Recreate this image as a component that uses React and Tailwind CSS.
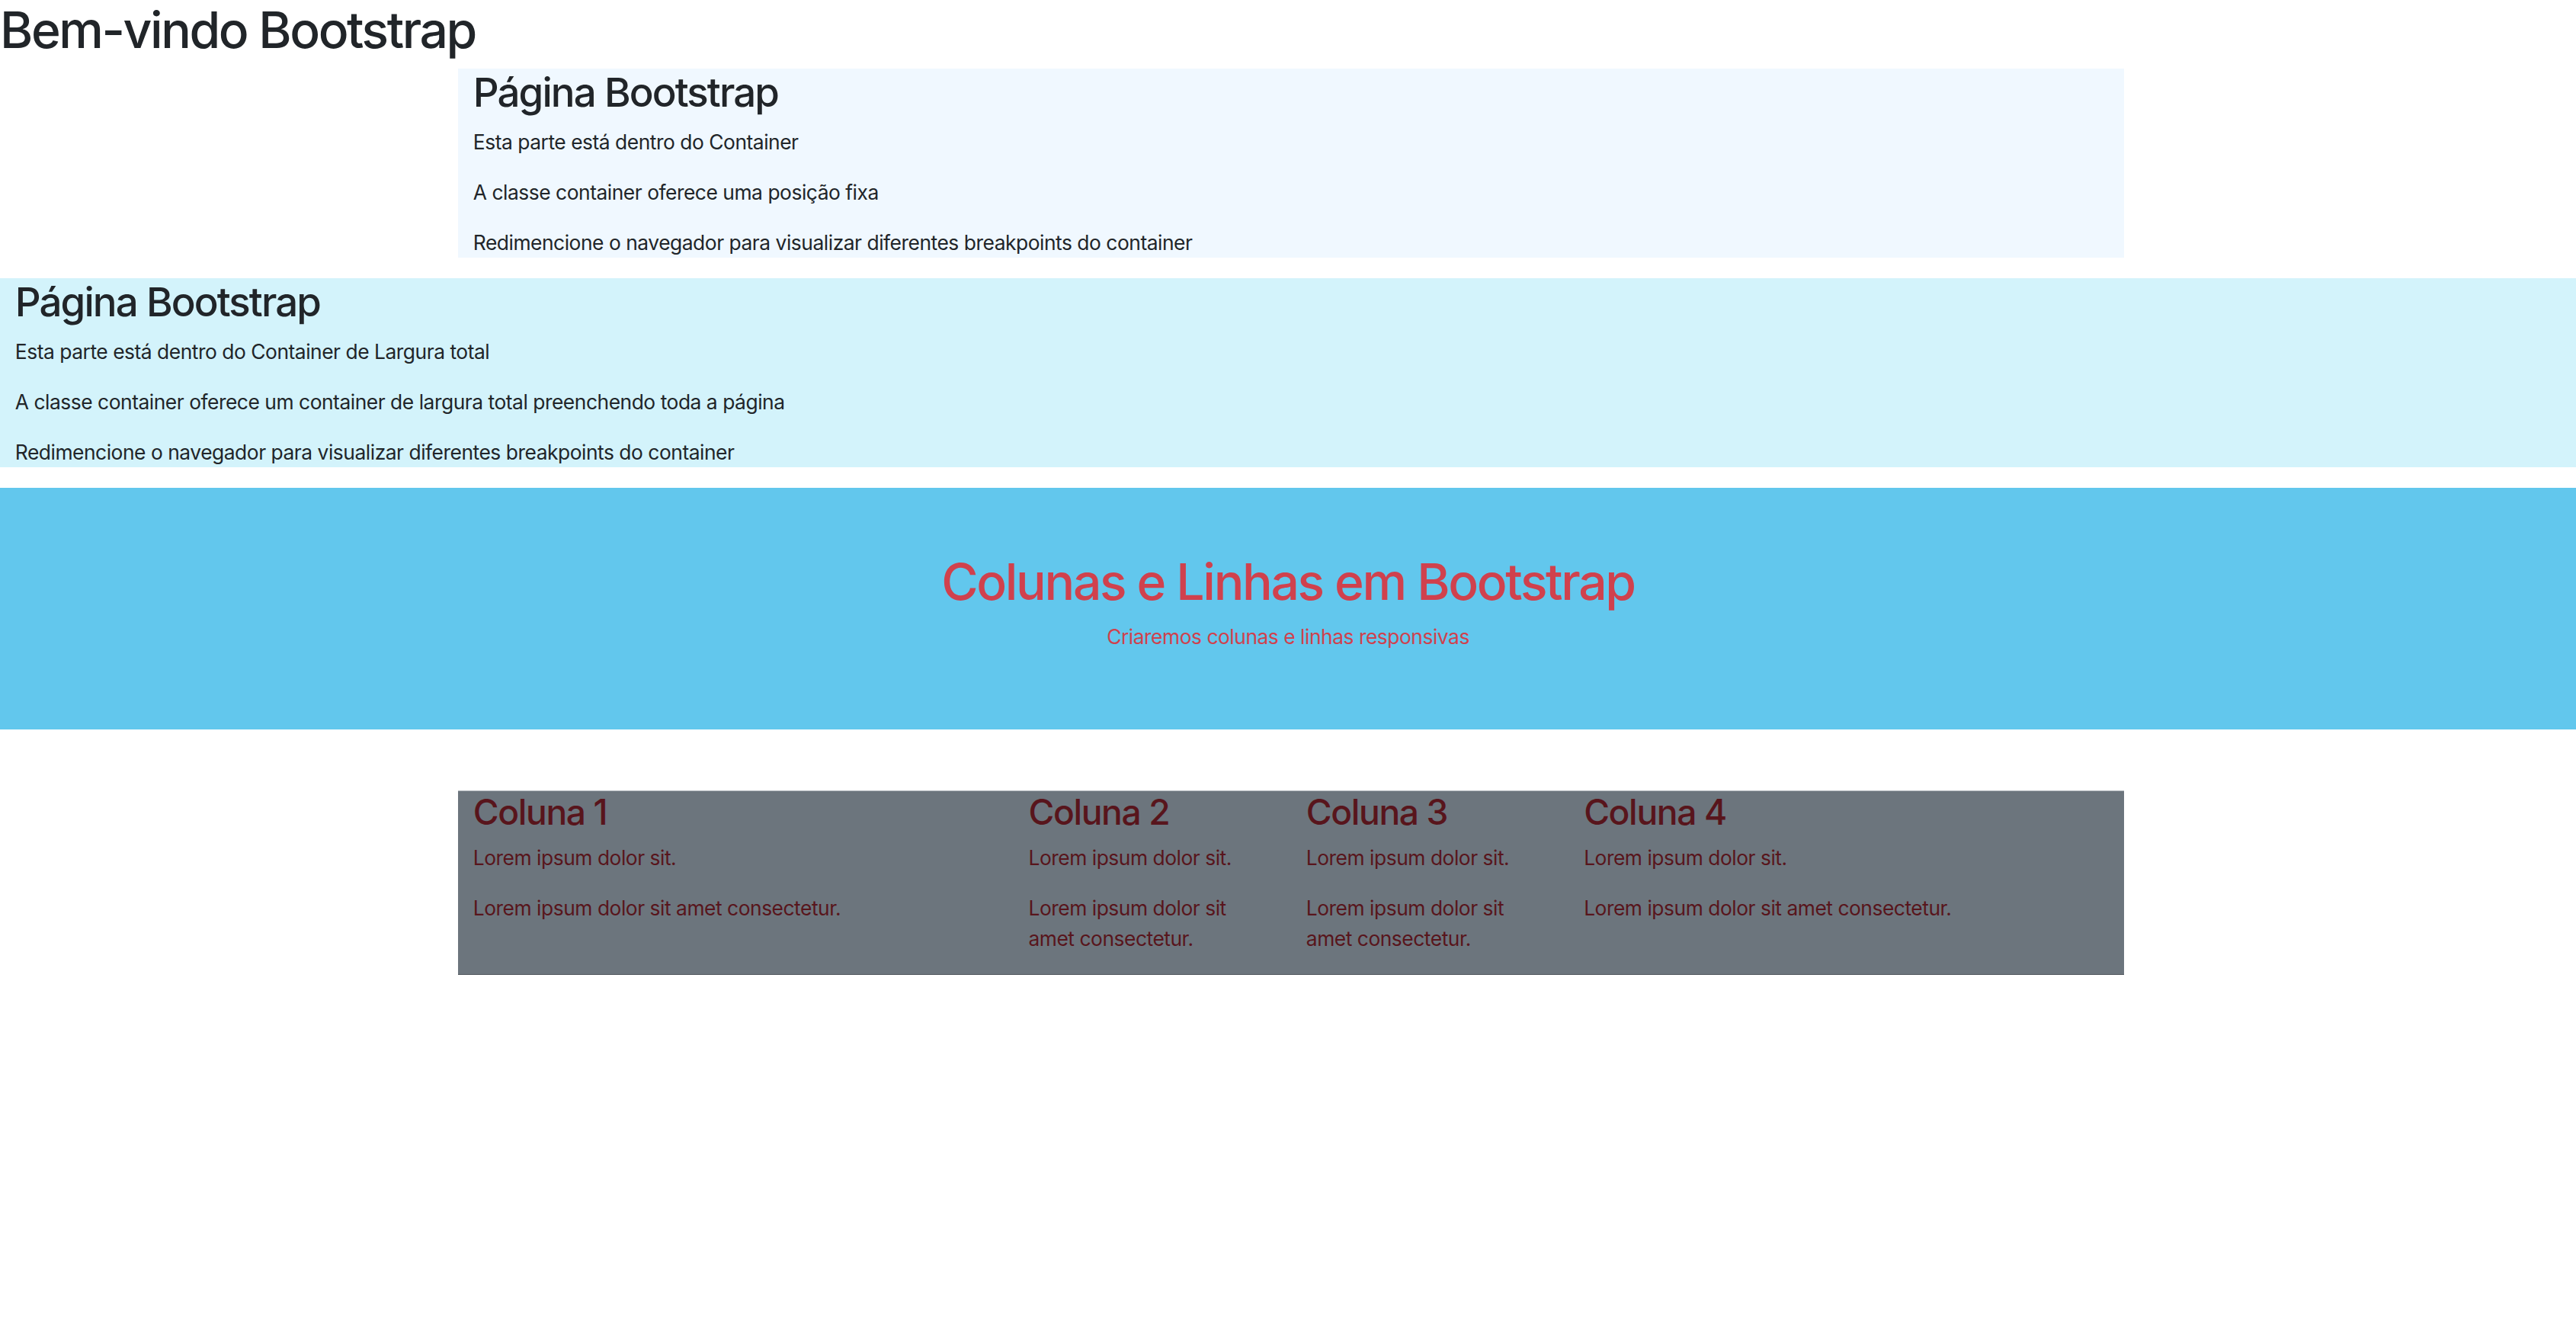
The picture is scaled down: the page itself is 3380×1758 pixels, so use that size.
import React from "react";

const font = { fontFamily: "Inter, 'Noto Sans', 'Liberation Sans', sans-serif" };

const Coluna = ({ span, title }) => (
  <div className={`${span} px-[19.8px]`}>
    <h3 className="text-[46.2px] leading-[1.2] font-medium tracking-[-0.03em] mb-[13.2px]">{title}</h3>
    <p className="mb-[26.4px]">Lorem ipsum dolor sit.</p>
    <p className="mb-[26.4px]">Lorem ipsum dolor sit amet consectetur.</p>
  </div>
);

const App = () => {
  return (
    <div
      className="min-h-screen bg-white text-[#212529] text-[26.4px] leading-[1.5] tracking-[-0.018em]"
      style={font}
    >
      <h1 className="text-[66px] leading-[1.2] font-medium tracking-[-0.037em] mb-[11px]">Bem-vindo Bootstrap</h1>

      <div className="ml-[601px] w-[2186px] bg-[#f0f8ff] px-[19.8px]">
        <h2 className="text-[52.8px] leading-[1.2] font-medium tracking-[-0.036em] mb-[13.2px]">Página Bootstrap</h2>
        <p className="mb-[26.4px]">Esta parte está dentro do Container</p>
        <p className="mb-[26.4px]">A classe container oferece uma posição fixa</p>
        <p>Redimencione o navegador para visualizar diferentes breakpoints do container</p>
      </div>

      <div className="mt-[27px] w-full bg-[#d3f3fb] px-[19.8px]">
        <h2 className="text-[52.8px] leading-[1.2] font-medium tracking-[-0.036em] mb-[13.2px]">Página Bootstrap</h2>
        <p className="mb-[26.4px]">Esta parte está dentro do Container de Largura total</p>
        <p className="mb-[26.4px]">
          A classe container oferece um container de largura total preenchendo toda a página
        </p>
        <p>Redimencione o navegador para visualizar diferentes breakpoints do container</p>
      </div>

      <div className="mt-[26.4px] w-full bg-[#62c7ed] pt-[84px] pb-[74.4px] text-center text-[#d0414d]">
        <h1 className="text-[66px] leading-[1.2] font-medium tracking-[-0.035em] mb-[13.2px]">
          Colunas e Linhas em Bootstrap
        </h1>
        <p className="mb-[26.4px]">Criaremos colunas e linhas responsivas</p>
      </div>

      <div className="ml-[601px] mt-[80px] w-[2186px] bg-[#6c757d] text-[#58151c] border-t border-t-[#b4b9be] border-b border-b-[#4f565c]">
        <div className="grid grid-cols-12">
          <Coluna span="col-span-4" title="Coluna 1" />
          <Coluna span="col-span-2" title="Coluna 2" />
          <Coluna span="col-span-2" title="Coluna 3" />
          <Coluna span="col-span-4" title="Coluna 4" />
        </div>
      </div>
    </div>
  );
};

export default App;
